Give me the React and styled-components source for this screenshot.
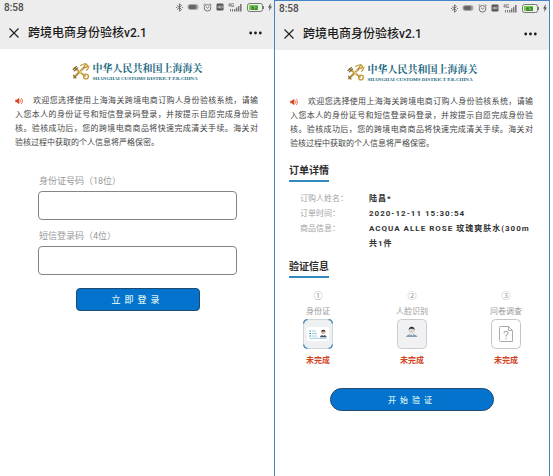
import React from 'react';
import styled, { createGlobalStyle } from 'styled-components';

const GlobalStyle = createGlobalStyle`
  * {
    box-sizing: border-box;
  }
  body {
    margin: 0;
    background-color: #fff;
    font-family: Roboto, 'Noto Sans CJK SC', sans-serif;
  }
  button,
  input {
    font-family: inherit;
    margin: 0;
  }
`;

const Page = styled.div`
  display: grid;
  grid-template-columns: 1fr 1fr;
  min-height: 100vh;
  padding-right: 3px;
`;

const Screen = styled.section`
  min-width: 0;
  border-right: 1px solid #4383c6;
  border-top: ${({ $framed }) => ($framed ? '1px solid #4383c6' : 'none')};
`;

const Header = styled.header`
  background-color: #ededed;
  color: #1c1c1c;
`;

const StatusBar = styled.div`
  display: flex;
  justify-content: space-between;
  align-items: center;
  height: 16px;
  padding: 0 2px 2px 4px;
  font-size: 10px;
  font-weight: 500;
  color: #4c4c4c;
  .icons {
    display: flex;
    align-items: center;
    gap: 4px;
  }
  svg {
    display: block;
  }
`;

const TitleBar = styled.div`
  display: flex;
  align-items: center;
  height: 33px;
  padding: 0 12px 0 9px;
  h1 {
    flex: 1;
    margin: 0 0 0 9px;
    font-size: 12px;
    line-height: 16px;
    font-weight: 500;
    white-space: nowrap;
  }
`;

const IconButton = styled.button`
  display: flex;
  padding: 0;
  border: none;
  background: none;
  color: #1c1c1c;
`;

const Brand = styled.div`
  display: flex;
  justify-content: center;
  gap: 3px;
  padding-top: 13px;
  color: #1d6880;
  svg {
    flex: none;
  }
  .name {
    font-family: 'Liberation Serif', 'Noto Serif CJK SC', 'Noto Sans CJK SC', serif;
    font-size: 10px;
    line-height: 14px;
    font-weight: 700;
    white-space: nowrap;
  }
  .name-en {
    font-family: 'Liberation Serif', serif;
    font-size: 5px;
    line-height: 5px;
    font-weight: 700;
    white-space: nowrap;
  }
`;

const Notice = styled.p`
  margin: 13px 16px 0 15px;
  font-size: 8px;
  line-height: 14px;
  color: #444;
  span {
    display: block;
    white-space: nowrap;
    text-align: justify;
    text-align-last: justify;
  }
  span:first-child {
    display: flex;
    align-items: center;
    gap: 10px;
  }
  span:first-child b {
    flex: 1;
    font-weight: 400;
  }
  span:last-child {
    text-align-last: left;
  }
`;

const LoginForm = styled.form`
  display: flex;
  flex-direction: column;
  padding: 24px 37px 0 38px;
`;

const Field = styled.div`
  margin-bottom: 9px;
  label {
    display: block;
    padding-left: 1px;
    margin-bottom: 3px;
    font-size: 9px;
    line-height: 14px;
    color: #999;
  }
  input {
    display: block;
    width: 100%;
    height: 29px;
    padding: 0 8px;
    border: 1px solid #858585;
    border-radius: 4px;
    background-color: #fff;
    font-size: 9px;
  }
`;

const PrimaryButton = styled.button`
  display: block;
  align-self: center;
  width: ${({ $pill }) => ($pill ? '60%' : '124px')};
  height: 23px;
  margin: ${({ $pill }) => ($pill ? '20px auto 0' : '4px 0 0')};
  padding: 0;
  border: 1px solid #1f4a70;
  border-radius: ${({ $pill }) => ($pill ? '12px' : '4px')};
  background-color: #0473ce;
  color: #d3f0ee;
  font-size: ${({ $pill }) => ($pill ? '8px' : '9px')};
  font-weight: 500;
  letter-spacing: 4px;
`;

const SectionTitle = styled.h2`
  width: fit-content;
  margin: ${({ $gap }) => $gap}px 0 0 14px;
  padding-bottom: 1px;
  border-bottom: 2px solid #3289bd;
  font-size: 10px;
  line-height: 16px;
  font-weight: 700;
  color: #2e2e2e;
`;

const Details = styled.dl`
  display: grid;
  grid-template-columns: 69px 1fr;
  margin: 9px 16px 0 25px;
  font-size: 8px;
  line-height: 15px;
  dt {
    color: #a3a3a3;
  }
  dd {
    margin: 0;
    font-weight: 700;
    letter-spacing: 1px;
    white-space: nowrap;
    color: #333;
  }
`;

const Steps = styled.ol`
  display: flex;
  justify-content: space-between;
  list-style: none;
  margin: 11px 25px 0;
  padding: 0;
`;

const Step = styled.li`
  display: flex;
  flex-direction: column;
  align-items: center;
  width: 36px;
  font-size: 8px;
  line-height: 15px;
  white-space: nowrap;
  color: #999;
  .number {
    font-size: 9px;
  }
  .status {
    margin-top: 4px;
    font-weight: 700;
    color: #d2451e;
  }
`;

const StatusIcons = ({ battery }) => (
  <div className='icons'>
    <svg width='7' height='9' viewBox='0 0 7 9' fill='none' stroke='#666' strokeWidth='0.9'>
      <path d='M1 2.5 5.5 6.3 3.5 8.3V0.7L5.5 2.7 1 6.5M0 4.5h1M6 4.5h1' />
    </svg>
    <svg width='12' height='8' viewBox='0 0 12 8'>
      <rect x='0.5' y='1' width='11' height='6' rx='3' fill='#aaa' />
      <rect x='1.5' y='2' width='8' height='4' rx='2' fill='#666' />
    </svg>
    <svg width='9' height='9' viewBox='0 0 9 9' fill='none' stroke='#666' strokeWidth='0.9'>
      <circle cx='4.5' cy='4.8' r='3.3' />
      <path d='M0.5 2 2.2 0.6M8.5 2 6.8 0.6M3 3.8 4.5 5.2 6 3.8' />
    </svg>
    <svg width='8' height='8' viewBox='0 0 8 8'>
      <rect x='0.5' y='0.5' width='7' height='7' rx='1.2' fill='#555' />
      <path d='M2 2.7v2.6M3.5 2.7v2.6M2 4h1.5M4.7 2.8h.6a1.2 1.2 0 0 1 0 2.4h-.6z' fill='none' stroke='#ddd' strokeWidth='0.6' />
    </svg>
    <svg width='15' height='9' viewBox='0 0 15 9' fill='#777'>
      <text x='0' y='4' fontSize='5' fontWeight='700'>4G</text>
      <path d='M2 6h1v2.5H2zM4 6h1v2.5H4zM6 6h1.4v2.5H6zM8 4.5h1.4v4H8zM10 3h1.4v5.5H10zM12 1h1.6v7.5H12z' />
    </svg>
    <svg width='17' height='9' viewBox='0 0 17 9'>
      <rect x='0.5' y='0.5' width='15' height='8' rx='2' fill='#e9f4e3' stroke='#777' />
      <rect x='2' y='2' width='9' height='5' fill='#6fd04f' />
      <text x='4' y='7' fontSize='6' fontWeight='700' fill='#3a5a35'>{battery}</text>
      <rect x='16' y='3' width='1' height='3' fill='#777' />
    </svg>
    <svg width='4' height='8' viewBox='0 0 4 8'>
      <path d='M2.8 0 0 4.5h1.6L1 8l3-4.6H2.3z' fill='#555' />
    </svg>
  </div>
);

const Emblem = () => (
  <svg width='18' height='18' viewBox='0 0 18 18' fill='none' stroke='#c39c40' strokeLinecap='round'>
    <path d='M2 15.5 12.5 5' stroke='#b38a35' strokeWidth='2' />
    <path d='M2.5 6 13 14' strokeWidth='1.8' />
    <path d='M1 7.5 4.5 4.5M2.2 9 5.8 5.8M1.5 13.2 4 16.2' stroke='#7d6431' strokeWidth='1.1' />
    <path d='M8.5 3.5C11 2.2 12.7 1.8 14 1.5M14.5 8.5C16.2 7 16.8 5.5 17 4' strokeWidth='1.1' />
    <circle cx='14' cy='4' r='1.8' fill='#e0c675' />
    <circle cx='14' cy='14.5' r='2.4' strokeWidth='1.4' />
    <path d='M6.5 7.5 9 11M10 7 7.5 12' stroke='#ecd999' strokeWidth='0.8' />
  </svg>
);

const Speaker = () => (
  <svg width='8' height='8' viewBox='0 0 8 8' fill='none' stroke='#e0603a' strokeWidth='0.8'>
    <path d='M0.3 2.7h1.5L4.3 0.8v6.4L1.8 5.3H0.3z' fill='#d9441b' stroke='none' />
    <path d='M5.2 2.3a2.4 2.4 0 0 1 0 3.4M6.2 1a4.2 4.2 0 0 1 0 6' />
  </svg>
);

const IdCardIcon = () => (
  <svg width='30' height='30' viewBox='0 0 30 30'>
    <rect x='0.5' y='0.5' width='29' height='29' rx='4' fill='#eef0f2' stroke='#d2d5d8' />
    <path d='M.7 4.5A4 4 0 0 1 4.5.7M25.5.7a4 4 0 0 1 3.8 3.8M29.3 25.5a4 4 0 0 1-3.8 3.8M4.5 29.3a4 4 0 0 1-3.8-3.8' fill='none' stroke='#3c86b5' strokeWidth='1.3' />
    <rect x='4' y='8' width='22' height='14' rx='1' fill='#fff' />
    <path d='M6.5 12h1.5M6.5 14.5h1.5M6.5 17h1.5' stroke='#2e86b8' strokeWidth='1.2' />
    <path d='M9 12h4M9 14.5h5M9 17h5M6.5 19.3h17' stroke='#9dcbe0' />
    <circle cx='20.3' cy='13.2' r='2' fill='#e6b696' />
    <path d='M18.2 13c-.3-3 4.5-3 4.2 0-1.2-1.2-3-1-4.2 0z' fill='#34302e' />
    <path d='M17 18.3c0-3 6.6-3 6.6 0z' fill='#3b5066' />
    <path d='m19.5 16 .8 1.2.8-1.2z' fill='#fff' />
  </svg>
);

const FaceIcon = () => (
  <svg width='30' height='30' viewBox='0 0 30 30'>
    <rect x='0.5' y='0.5' width='29' height='29' rx='4' fill='#f1f1f3' stroke='#c9cbcf' />
    <path d='M9 18c.5-2.3 2.8-2.3 4.2-3h3c1.4.7 3.7.7 4.2 3z' fill='#8d9eb2' />
    <path d='m12.8 14.8 1.9 3 1.9-3z' fill='#fff' />
    <path d='M14.7 15.5v2.4' stroke='#4578a6' strokeWidth='0.8' />
    <circle cx='14.7' cy='11.7' r='2.9' fill='#d9d5d3' />
    <path d='M11.7 11.8C11 6.5 18.5 6.5 17.7 11.8c-.5-2-1.2-2-3-2s-2.5 0-3 2z' fill='#2b2c2e' />
  </svg>
);

const SurveyIcon = () => (
  <svg width='30' height='30' viewBox='0 0 30 30' fill='none' stroke='#aaa'>
    <rect x='0.5' y='0.5' width='29' height='29' rx='4' fill='#fefefe' stroke='#c5c5c5' />
    <path d='M9.5 7.5h8l4 4v11h-12a1 1 0 0 1-1-1v-13a1 1 0 0 1 1-1zM17.5 7.5v4h4' />
    <path d='M13 14.2c0-2.6 4.2-2.4 4 0-.2 1.6-2 1.5-2 3.5M15 19v1.2' strokeWidth='1.1' />
  </svg>
);

const steps = [
  { number: '①', name: '身份证', Icon: IdCardIcon },
  { number: '②', name: '人脸识别', Icon: FaceIcon },
  { number: '③', name: '问卷调查', Icon: SurveyIcon }
];

const PhoneScreen = ({ battery, framed, children }) => (
  <Screen $framed={framed}>
    <Header>
      <StatusBar>
        8:58
        <StatusIcons battery={battery} />
      </StatusBar>
      <TitleBar>
        <IconButton type='button' aria-label='关闭'>
          <svg width='10' height='10' viewBox='0 0 10 10' stroke='currentColor' strokeWidth='1.1'>
            <path d='M.5.5l9 9M9.5.5l-9 9' />
          </svg>
        </IconButton>
        <h1>跨境电商身份验核v2.1</h1>
        <IconButton type='button' aria-label='更多'>
          <svg width='13' height='4' viewBox='0 0 13 4' fill='currentColor'>
            <circle cx='1.7' cy='2' r='1.4' />
            <circle cx='6.5' cy='2' r='1.4' />
            <circle cx='11.3' cy='2' r='1.4' />
          </svg>
        </IconButton>
      </TitleBar>
    </Header>
    <Brand>
      <Emblem />
      <div>
        <div className='name'>中华人民共和国上海海关</div>
        <div className='name-en'>SHANGHAI CUSTOMS DISTRICT P.R.CHINA</div>
      </div>
    </Brand>
    <Notice>
      <span>
        <Speaker />
        <b>欢迎您选择使用上海海关跨境电商订购人身份验核系统，请输</b>
      </span>
      <span>入您本人的身份证号和短信登录码登录，并按提示自愿完成身份验</span>
      <span>核。验核成功后，您的跨境电商商品将快速完成清关手续。海关对</span>
      <span>验核过程中获取的个人信息将严格保密。</span>
    </Notice>
    {children}
  </Screen>
);

export default function App() {
  return (
    <>
      <GlobalStyle />
      <Page>
        <PhoneScreen battery='62'>
          <LoginForm onSubmit={e => e.preventDefault()}>
            <Field>
              <label htmlFor='id-number'>身份证号码（18位）</label>
              <input id='id-number' type='text' maxLength={18} />
            </Field>
            <Field>
              <label htmlFor='sms-code'>短信登录码（4位）</label>
              <input id='sms-code' type='text' maxLength={4} />
            </Field>
            <PrimaryButton type='submit'>立即登录</PrimaryButton>
          </LoginForm>
        </PhoneScreen>

        <PhoneScreen battery='63' framed>
          <SectionTitle $gap={12}>订单详情</SectionTitle>
          <Details>
            <dt>订购人姓名：</dt>
            <dd>陆昌*</dd>
            <dt>订单时间：</dt>
            <dd>2020-12-11 15:30:54</dd>
            <dt>商品信息：</dt>
            <dd>
              ACQUA ALLE ROSE 玫瑰爽肤水(300m
              <br />
              共1件
            </dd>
          </Details>
          <SectionTitle $gap={8}>验证信息</SectionTitle>
          <Steps>
            {steps.map(({ number, name, Icon }) => (
              <Step key={name}>
                <span className='number'>{number}</span>
                <span>{name}</span>
                <Icon />
                <span className='status'>未完成</span>
              </Step>
            ))}
          </Steps>
          <PrimaryButton type='button' $pill>
            开始验证
          </PrimaryButton>
        </PhoneScreen>
      </Page>
    </>
  );
}
